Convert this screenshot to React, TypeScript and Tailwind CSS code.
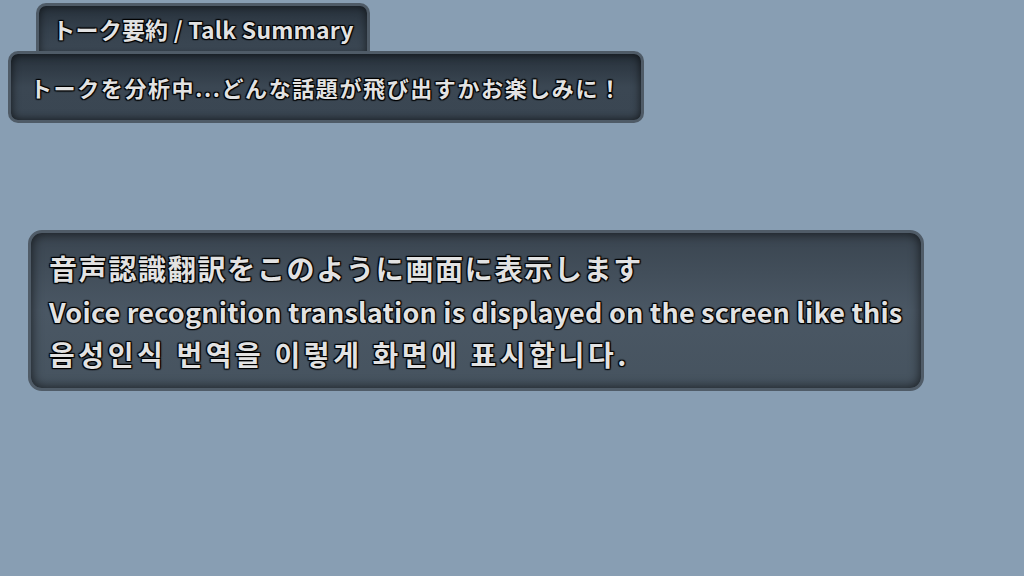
import React from "react";

const shadow =
  "[text-shadow:0_0_1px_#000,0_0_2px_#000,1px_1px_1px_#000,-1px_-1px_1px_#000,1px_-1px_1px_#000,-1px_1px_1px_#000]";

export default function App() {
  return (
    <div
      className="w-[1024px] h-[576px] bg-[#889eb3] overflow-hidden text-[#e2e2e2]"
      style={{ fontFamily: '"Noto Sans CJK JP", "Noto Sans", sans-serif' }}
    >
      <div className="pt-[3px] flex flex-col items-start">
        <div className="ml-[36px] w-[334px] h-[52px] rounded-t-[10px] border-[3px] border-b-0 border-[#4f5b67] bg-gradient-to-b from-[#27313b] via-[#35414d] to-[#3d4955] shadow-[inset_0_0_8px_rgba(0,0,0,0.6)] flex items-start justify-center pt-[8px]">
          <span className={`text-[23px] leading-[30px] font-bold tracking-[0.2px] ${shadow}`}>
            トーク要約 / Talk Summary
          </span>
        </div>
        <div className="-mt-[4px] ml-[8px] w-[636px] h-[72px] rounded-[10px] border-[3px] border-[#4f5b67] bg-gradient-to-b from-[#27313b] via-[#3b4753] to-[#3a4652] shadow-[inset_0_0_10px_rgba(0,0,0,0.7)] flex items-center pl-[19px]">
          <span className={`text-[22px] leading-[30px] font-bold tracking-[1.6px] ${shadow}`}>
            トークを分析中...どんな話題が飛び出すかお楽しみに！
          </span>
        </div>
        <div className="mt-[107px] ml-[28px] w-[896px] h-[161px] rounded-[14px] border-[3px] border-[#505c68] bg-gradient-to-b from-[#3a4550] via-[#4a5764] to-[#46535f] shadow-[inset_0_0_12px_rgba(0,0,0,0.7)] flex flex-col pl-[18px] pt-[13px]">
          <p className={`text-[28px] leading-[44px] font-bold tracking-[1.7px] ${shadow}`}>
            音声認識翻訳をこのように画面に表示します
          </p>
          <p
            className={`text-[27px] leading-[43px] font-bold tracking-[0.2px] ${shadow}`}
          >
            Voice recognition translation is displayed on the screen like this
          </p>
          <p
            className={`text-[28px] leading-[43px] font-bold tracking-[3.6px] ${shadow}`}
            style={{ fontFamily: '"Noto Sans CJK KR", "Noto Sans", sans-serif' }}
          >
            음성인식 번역을 이렇게 화면에 표시합니다.
          </p>
        </div>
      </div>
    </div>
  );
}
